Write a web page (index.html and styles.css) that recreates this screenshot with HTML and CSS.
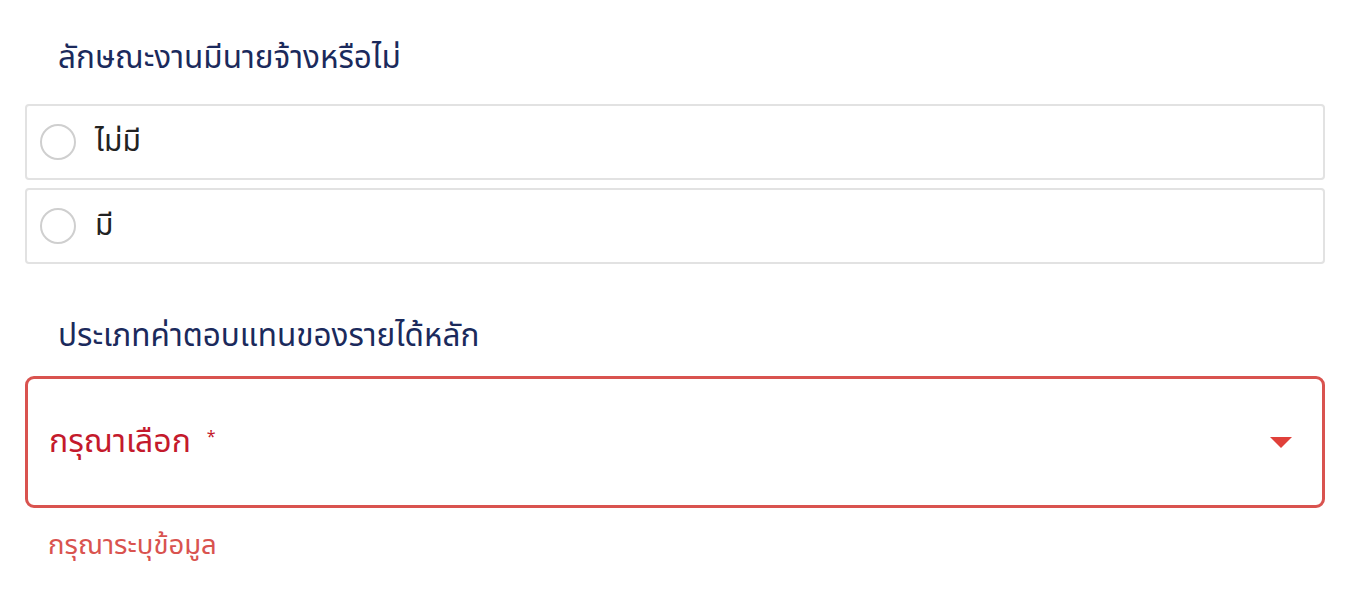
FILE: index.html
```html
<!DOCTYPE html>
<html lang="th">
<head>
<meta charset="utf-8">
<link rel="stylesheet" href="styles.css">
</head>
<body>
<div class="form">
  <div class="field">
    <div class="label">ลักษณะงานมีนายจ้างหรือไม่</div>
    <div class="options">
      <div class="option"><span class="radio"></span><span class="opt-text">ไม่มี</span></div>
      <div class="option"><span class="radio"></span><span class="opt-text">มี</span></div>
    </div>
  </div>
  <div class="field field-2">
    <div class="label">ประเภทค่าตอบแทนของรายได้หลัก</div>
    <div class="select">
      <span class="placeholder">กรุณาเลือก<span class="req">*</span></span>
      <svg class="caret" width="22" height="11" viewBox="0 0 22 11"><path d="M0 0 H22 L11 11 Z" fill="#e0403a"/></svg>
    </div>
    <div class="error">กรุณาระบุข้อมูล</div>
  </div>
</div>
</body>
</html>
```
FILE: styles.css
```css
html, body {
  margin: 0;
  padding: 0;
  background: #ffffff;
}
body {
  font-family: "Noto Sans", "Noto Sans Thai", sans-serif;
}
.form {
  padding: 34px 35px 0 25px;
}
.label {
  color: #1b2a5c;
  font-size: 31.5px;
  line-height: 44px;
  padding-left: 33px;
}
.options {
  margin-top: 26px;
  display: flex;
  flex-direction: column;
  gap: 8px;
}
.option {
  height: 72px;
  border: 2px solid #e2e2e2;
  border-radius: 4px;
  display: flex;
  align-items: center;
  padding-left: 13px;
  gap: 19px;
}
.radio {
  width: 32px;
  height: 32px;
  border: 2px solid #cfcfcf;
  border-radius: 50%;
  box-sizing: content-box;
}
.opt-text {
  color: #222;
  font-size: 30px;
}
.field-2 {
  margin-top: 48px;
}
.select {
  margin-top: 20px;
  height: 126px;
  border: 3px solid #d9534f;
  border-radius: 9px;
  display: flex;
  align-items: center;
  justify-content: space-between;
  padding: 0 30px 0 21px;
}
.placeholder {
  color: #c41a2c;
  font-size: 32px;
}
.req {
  font-size: 16px;
  margin-left: 16px;
  vertical-align: 10px;
}
.error {
  color: #d9534f;
  font-size: 27.5px;
  padding-left: 23px;
  margin-top: 17px;
}
```
